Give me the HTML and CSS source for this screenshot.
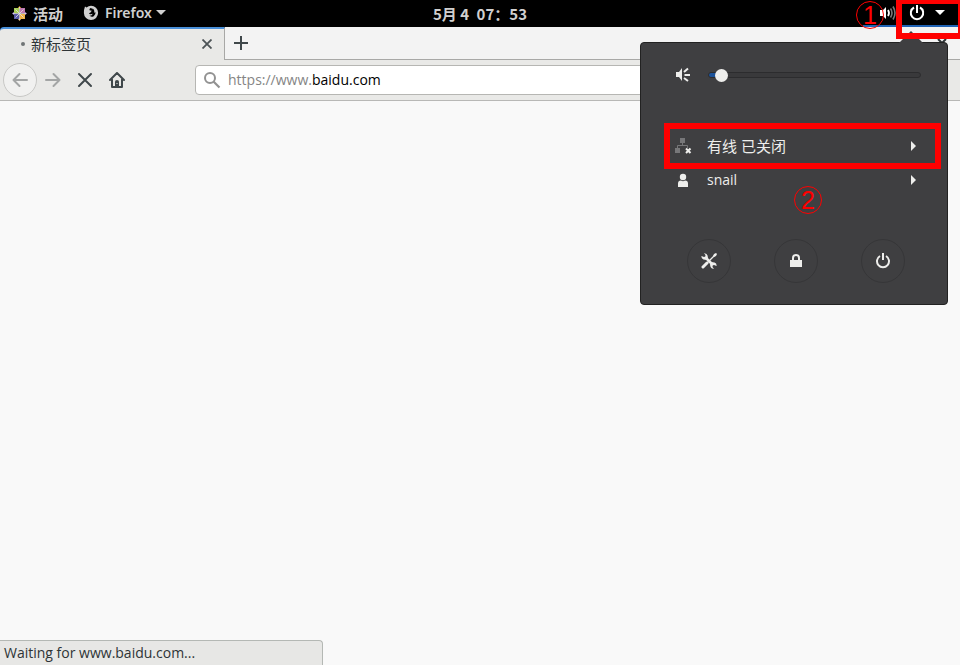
FILE: index.html
```html
<!DOCTYPE html>
<html lang="zh-CN">
<head>
<meta charset="utf-8">
<title>新标签页</title>
<link rel="stylesheet" href="styles.css">
</head>
<body>
<header class="panel">
  <div class="panel-left">
    <button class="panel-btn activities">
      <svg class="distro" width="15" height="15" viewBox="0 0 15 15" aria-hidden="true">
        <path fill="#efa724" d="M7.500 0l2 2.500h-4z"/>
        <path fill="#a58fd0" d="M0 7.500l2.500-2v4z"/>
        <path fill="#a58fd0" d="M15 7.500l-2.500-2v4z"/>
        <path fill="#e8c07a" d="M7.500 15l2-2.500h-4z"/>
        <path fill="#a9cf58" d="M2 2h5v5H2z"/>
        <path fill="#c07ab0" d="M8 2h5v5H8z"/>
        <path fill="#5a5aa8" d="M2 8h5v5H2z"/>
        <path fill="#f0b548" d="M8 8h5v5H8z"/>
        <path fill="none" stroke="#e8e4e8" stroke-width=".8" d="M7.500 1v13M1 7.500h13M3.500 3.500l8 8M11.500 3.500l-8 8"/>
      </svg>
      <span>活动</span>
    </button>
    <button class="panel-btn firefox">
      <svg width="16" height="16" viewBox="0 0 16 16" aria-hidden="true">
        <path fill="#d0d0d0" fill-rule="evenodd" d="M2 1.500L3.500 2.500Q5.500.8 8 .8A7.100 7.100 0 1 1 .9 8Q.8 4.500 2 1.500zM7.500 3Q6 4 6.500 5.200L8.800 5.800 7.500 7.500 6 8.200Q6.300 9.500 7.800 9.300L9.800 8.800Q8.700 11 6.200 10.600 8.200 12.500 10.700 11.200 12.900 9.800 12.500 7L11.500 8Q11.600 4.500 9.500 3L10 4.500Q9 3 7.500 3z"/>
      </svg>
      <span>Firefox</span>
      <svg width="10" height="6" viewBox="0 0 10 6" aria-hidden="true"><path fill="#d0d0d0" d="M0 0h10L5 5z"/></svg>
    </button>
  </div>
  <time class="clock">5月 4&ensp;07：53</time>
  <button class="system" aria-label="系统菜单">
    <svg width="18" height="16" viewBox="0 0 18 16" aria-hidden="true">
      <path fill="#fff" d="M1 5h3l3-3v12l-3-3H1z"/>
      <path fill="none" stroke="#fff" stroke-width="1.800" d="M9 5q2 3 0 6"/>
      <path fill="none" stroke="#777" stroke-width="1.600" d="M11.500 3.500q3 4.500 0 9M14 1.500q4 6.500 0 13"/>
    </svg>
    <svg class="power" width="16" height="16" viewBox="0 0 16 16" aria-hidden="true"><path fill="none" stroke="#fff" stroke-width="2" d="M5 2.500a6.200 6.200 0 1 0 6 0M8 0v8"/></svg>
    <svg width="10" height="6" viewBox="0 0 10 6" aria-hidden="true"><path fill="#fff" d="M0 0h10L5 5z"/></svg>
  </button>
</header>

<nav class="tabs">
  <div class="tab">
    <span class="tab-dot"></span>
    <span class="tab-title">新标签页</span>
    <button class="icon-btn" aria-label="关闭标签页"><svg width="10" height="10" viewBox="0 0 10 10"><path stroke="#4c5356" stroke-width="1.800" d="M.5.5l9 9M9.500.5l-9 9"/></svg></button>
  </div>
  <div class="tab-rest">
    <button class="icon-btn" aria-label="新建标签页"><svg width="14" height="14" viewBox="0 0 14 14"><path stroke="#40484b" stroke-width="2" d="M7 0v14M0 7h14"/></svg></button>
    <button class="icon-btn" aria-label="关闭窗口"><svg width="10" height="10" viewBox="0 0 10 10"><path stroke="#2e3436" stroke-width="2" d="M1 1l8 8M9 1L1 9"/></svg></button>
  </div>
</nav>

<div class="toolbar">
  <button class="nav-btn back" aria-label="后退"><svg width="16" height="16" viewBox="0 0 16 16"><path fill="none" stroke="#a3a5a5" stroke-width="2" stroke-linecap="round" stroke-linejoin="round" d="M15 8H1.500M7.500 2l-6 6 6 6"/></svg></button>
  <button class="nav-btn" aria-label="前进"><svg width="16" height="16" viewBox="0 0 16 16"><path fill="none" stroke="#a3a5a5" stroke-width="2" stroke-linecap="round" stroke-linejoin="round" d="M1 8h13.500M8.500 2l6 6-6 6"/></svg></button>
  <button class="nav-btn" aria-label="停止"><svg width="16" height="16" viewBox="0 0 16 16"><path stroke="#40484b" stroke-width="2" stroke-linecap="round" d="M2 2l12 12M14 2L2 14"/></svg></button>
  <button class="nav-btn" aria-label="主页"><svg width="16" height="16" viewBox="0 0 16 16"><path fill="none" stroke="#40484b" stroke-width="2" stroke-linecap="round" stroke-linejoin="round" d="M1 8l7-7 7 7M3 7.500V15h10V7.500"/><path fill="#40484b" d="M6 15V9.500Q6 8 8 8t2 1.500V15z"/><path fill="#e9e9e7" d="M7.500 11h1v1h-1z"/></svg></button>
  <label class="url">
    <svg width="18" height="18" viewBox="0 0 18 18" aria-hidden="true"><circle cx="7" cy="7" r="5" fill="none" stroke="#929292" stroke-width="2"/><path stroke="#929292" stroke-width="2.200" d="M10.500 10.500l6 6"/></svg>
    <span class="url-text" role="textbox" contenteditable="true" spellcheck="false" aria-label="网址">https://www.<b>baidu.com</b></span>
  </label>
</div>

<main class="page"></main>
<footer class="status">Waiting for www.baidu.com...</footer>

<section class="menu" aria-label="系统菜单">
  <div class="volume">
    <svg width="16" height="16" viewBox="0 0 16 16" aria-hidden="true"><path fill="#eeeeec" d="M1 5h3l3-4v13l-3-4H1z"/><path stroke="#eeeeec" stroke-width="2" d="M9 5l4-3.500M9.500 8H15M9 11l4 3"/></svg>
    <input type="range" min="0" max="100" value="3" aria-label="音量">
  </div>
  <button class="item network">
    <svg width="18" height="16" viewBox="0 0 18 16" aria-hidden="true"><path fill="#777779" d="M5 0h5v5H5zM0 10h5v5H0z"/><path fill="none" stroke="#777779" d="M7.500 5v3M2.500 10V7.500h10V10"/><path stroke="#eeeeec" stroke-width="2" d="M11 10.500l4.500 4.500M15.500 10.500L11 15"/></svg>
    <span>有线 已关闭</span>
    <svg width="6" height="10" viewBox="0 0 6 10" aria-hidden="true"><path fill="#eeeeec" d="M0 0l5 5-5 5z"/></svg>
  </button>
  <button class="item">
    <svg width="18" height="16" viewBox="0 0 18 16" aria-hidden="true"><circle cx="8" cy="5" r="3.200" fill="#eeeeec"/><path fill="#eeeeec" d="M3 15v-3.500q0-3 3-3 2 1.500 4 0 3 0 3 3V15z"/></svg>
    <span>snail</span>
    <svg width="6" height="10" viewBox="0 0 6 10" aria-hidden="true"><path fill="#eeeeec" d="M0 0l5 5-5 5z"/></svg>
  </button>
  <div class="actions">
    <button aria-label="设置"><svg width="16" height="16" viewBox="0 0 16 16"><path fill="none" stroke="#eeeeec" stroke-width="3" stroke-linecap="round" d="M2 14l4-4"/><path stroke="#eeeeec" stroke-width="2.500" d="M4.500 4.500l7 7"/><path stroke="#eeeeec" stroke-width="1.200" d="M6 10l8-8"/><path fill="#eeeeec" d="M13 1l2-1 1 1-1 2-2 1-1-1zM3 .3L4.500 2 4.300 3.500 3 4 .5 3Q0 5.500 2.500 6.500L6 7 7 5.500Q7 0 3 .3zM13 15.700L11.500 14l.2-1.500L13 12l2.500 1q.5-2.500-2-3.500L10 9l-1 1.500q0 5.500 4 5.200z"/></svg></button>
    <button aria-label="锁定"><svg width="16" height="16" viewBox="0 0 16 16"><path fill="#eeeeec" d="M2 7h12v7H2z"/><path fill="none" stroke="#eeeeec" stroke-width="2" d="M5 8V5q0-3 3-3t3 3v3"/></svg></button>
    <button aria-label="关机"><svg width="16" height="16" viewBox="0 0 16 16"><path fill="none" stroke="#eeeeec" stroke-width="2" d="M5 3a6 6 0 1 0 6 0M8 0v7"/></svg></button>
  </div>
  <span class="frame frame-network"></span>
  <span class="step step-two">2</span>
</section>
<span class="frame frame-system"></span>
<span class="step step-one">1</span>
</body>
</html>
```
FILE: styles.css
```css
* { box-sizing: border-box; }

body {
  margin: 0;
  min-height: 100vh;
  display: flex;
  flex-direction: column;
  position: relative;
  overflow: hidden;
  background: #f9f9f9;
  color: #2e3436;
  font: 14px/20px "Open Sans", "Noto Sans CJK SC", sans-serif;
}

button {
  display: flex;
  align-items: center;
  justify-content: center;
  margin: 0;
  padding: 0;
  border: 0;
  background: none;
  color: inherit;
  font: inherit;
}

svg { display: block; flex: none; }

.panel {
  height: 27px;
  display: grid;
  grid-template-columns: 1fr auto 1fr;
  background: #000;
  color: #d0d0d0;
  font-family: "Noto Sans", "Noto Sans CJK SC", sans-serif;
  font-weight: 600;
}

.panel-left { display: flex; padding-left: 12px; gap: 20px; }
.panel-btn { gap: 6px; }
.activities { font-size: 15px; }
.firefox { padding-bottom: 1px; }
.firefox svg:last-child { margin-left: -2px; }
.clock {
  align-self: center;
  font: 600 15px/20px "Noto Sans CJK SC", sans-serif;
}

.system {
  justify-self: end;
  width: 95px;
  margin-right: 2px;
  padding-right: 13px;
  justify-content: flex-end;
  gap: 10px;
  border-bottom: 2px solid #1f62b4;
}
.system .power { margin-left: 2px; }

.tabs { display: flex; height: 33px; background: #000; }

.tab {
  width: 225px;
  display: flex;
  align-items: center;
  padding: 0 12px 2px 21px;
  border-top: 2px solid #4a90d9;
  border-right: 1px solid #a8a8a6;
  border-radius: 4px 0 0 0;
  background: #e9e9e7;
  font-size: 15px;
}
.tab-dot {
  width: 4px;
  height: 4px;
  margin-right: 6px;
  border-radius: 50%;
  background: #6f7475;
}
.tab-title { flex: 1; }

.tab-rest {
  flex: 1;
  display: flex;
  align-items: center;
  justify-content: space-between;
  padding: 0 13px 0 9px;
  border-bottom: 1px solid #a8a8a6;
  background: #f3f3f3;
}

.toolbar {
  height: 41px;
  display: flex;
  align-items: center;
  padding: 0 12px 0 3px;
  border-bottom: 1px solid #b8b8b6;
  background: #e9e9e7;
}
.nav-btn { width: 32px; height: 32px; }
.back {
  width: 34px;
  height: 34px;
  border: 1px solid #c8c8c6;
  border-radius: 50%;
  background: #f1f1f0;
}
.url {
  flex: 1;
  height: 30px;
  display: flex;
  align-items: center;
  gap: 7px;
  margin-left: 62px;
  padding: 0 7px;
  border: 1px solid #b6b6b3;
  border-radius: 4px;
  background: #fff;
  color: #858585;
}
.url-text { flex: 1; }
.url b { color: #000; font-weight: 400; }

.page { flex: 1; }

.status {
  width: 323px;
  height: 25px;
  padding: 2px 4px;
  border: 1px solid #b4b8b4;
  border-width: 1px 1px 0 0;
  border-radius: 0 4px 0 0;
  background: #e7e7e5;
}

.menu {
  position: absolute;
  top: 42px;
  right: 12px;
  width: 308px;
  padding: 23px 26px 21px 34px;
  border: 1px solid #222;
  border-radius: 4px;
  background: #3f3f41;
  color: #eeeeec;
}
.menu::before {
  content: "";
  position: absolute;
  top: -12px;
  right: 24px;
  border: 12px solid transparent;
  border-top: 0;
  border-bottom-color: #3f3f41;
}

.volume { display: flex; align-items: center; gap: 17px; height: 18px; margin-bottom: 45px; }

.volume input {
  flex: 1;
  min-width: 0;
  height: 14px;
  margin: 0;
  background: none;
  appearance: none;
}
.volume input::-webkit-slider-runnable-track {
  height: 6px;
  border: 1px solid #2c2c2e;
  border-radius: 3px;
  background: linear-gradient(90deg, #1c5299 12px, #39393b 12px);
}
.volume input::-webkit-slider-thumb {
  width: 13px;
  height: 13px;
  margin-top: -4px;
  border-radius: 50%;
  background: #eeeeec;
  appearance: none;
}

.item {
  width: 100%;
  height: 34px;
  gap: 14px;
  padding-right: 4px;
  text-align: left;
}
.item span { flex: 1; }
.network { font-size: 15px; }

.actions {
  display: flex;
  justify-content: space-between;
  margin-top: 42px;
  padding: 0 16px 0 12px;
}
.actions button {
  width: 44px;
  height: 44px;
  border: 1px solid #363638;
  border-radius: 50%;
}

.frame { position: absolute; border: 6px solid #f00; pointer-events: none; }
.frame-network { top: 80px; left: 23px; right: 6px; height: 46px; }
.frame-system { top: -2px; right: -4px; width: 68px; height: 41px; }

.step {
  position: absolute;
  width: 28px;
  height: 28px;
  border: 1px solid #f00;
  border-radius: 50%;
  color: #f00;
  font: 25px/26px "Liberation Sans", sans-serif;
  text-align: center;
}
.step-one { top: 1px; right: 76px; }
.step-two { top: 143px; left: 153px; }
```
